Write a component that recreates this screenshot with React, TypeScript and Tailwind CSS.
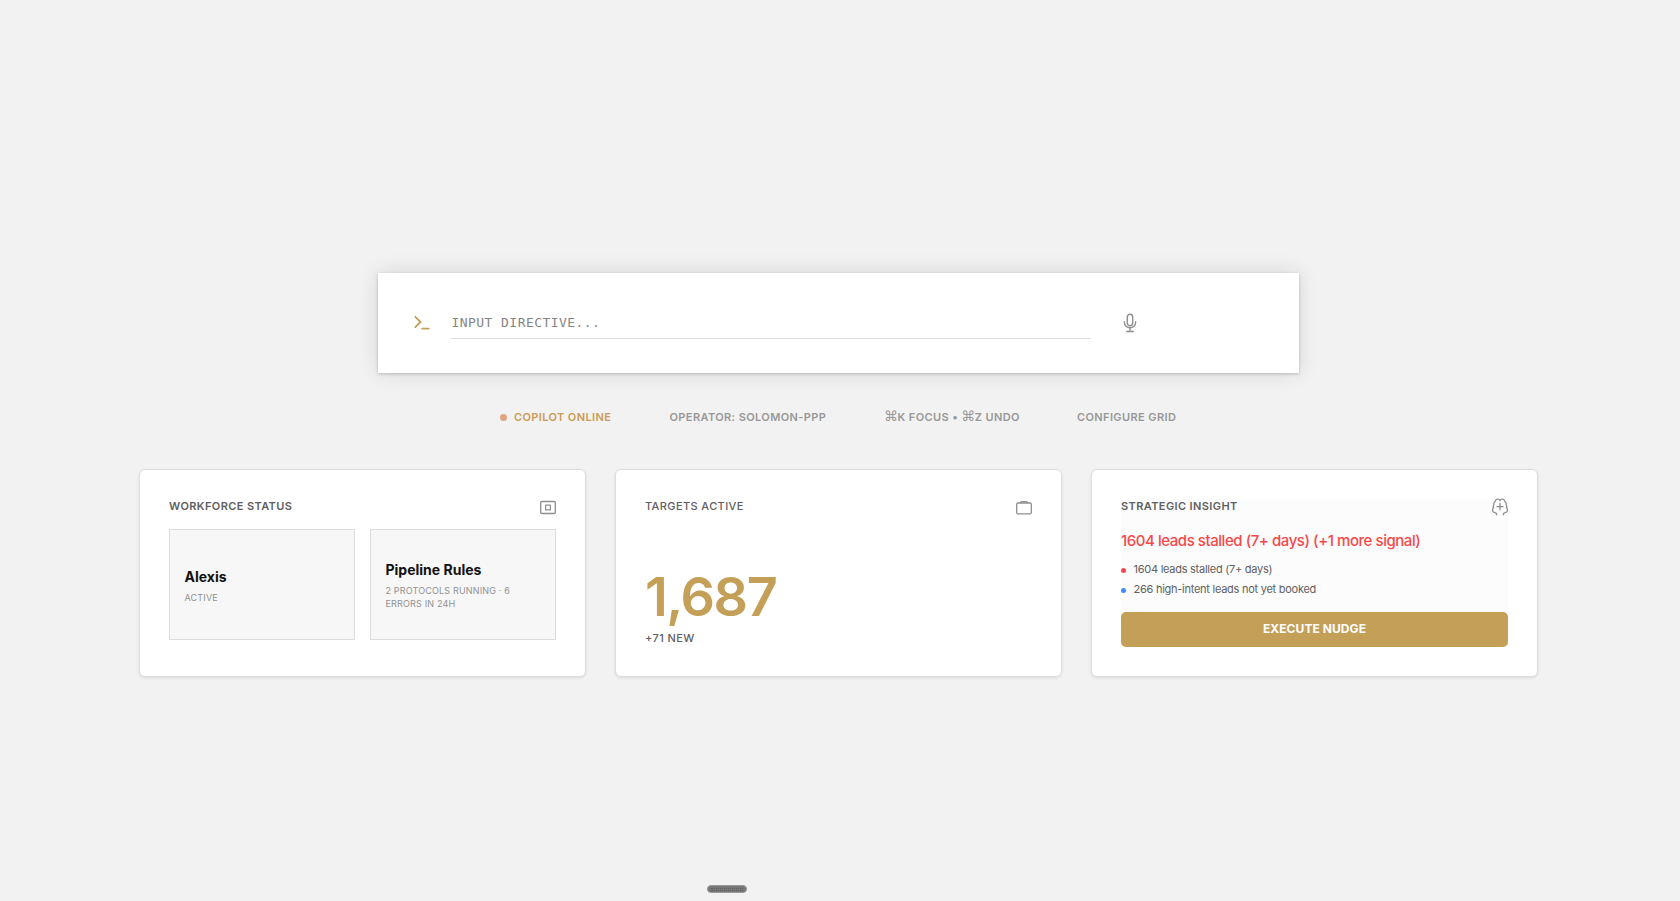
import type { ReactNode } from "react";

const iconProps = {
  fill: "none",
  stroke: "currentColor",
  strokeLinecap: "round" as const,
  strokeLinejoin: "round" as const,
};

function PromptIcon() {
  return (
    <svg width="18" height="18" viewBox="0 0 18 18" {...iconProps} strokeWidth="1.8" className="mb-[2px] ml-px shrink-0 text-[#c49f58]">
      <path d="M2.3 3.800 7.500 9 2.300 14.200M9.200 15.600h6.600" />
    </svg>
  );
}

function MicIcon() {
  return (
    <svg width="14" height="20" viewBox="0 0 14 20" {...iconProps} strokeWidth="1.4" className="shrink-0 text-[#8f8f8f]">
      <rect x="4.300" y="1.300" width="5.400" height="11.500" rx="2.700" />
      <path d="M1.400 8.600v1a5.600 5.200 0 0 0 11.200 0v-1M7 15v3.200M3.700 18.500h6.600" />
    </svg>
  );
}

function StatusIcon() {
  return (
    <svg width="16" height="18" viewBox="0 0 16 18" {...iconProps} strokeWidth="1.300">
      <rect x="0.700" y="2.500" width="14.600" height="12" rx="1" />
      <rect x="5.600" y="6.100" width="4.800" height="4.800" />
    </svg>
  );
}

function CaseIcon() {
  return (
    <svg width="16" height="18" viewBox="0 0 16 18" {...iconProps} strokeWidth="1.300">
      <rect x="0.700" y="4" width="14.600" height="10.800" rx="1.200" />
      <path d="M4.400 3.500c.4-.6.800-.8 1.600-.8h4c.8 0 1.200.2 1.600.8" />
    </svg>
  );
}

function BrainIcon() {
  return (
    <svg width="16" height="18" viewBox="0 0 16 18" {...iconProps} strokeWidth="1.300" className="-mt-px">
      <path d="M8 2.600C7.600 1.300 6.300.8 5.100 1.200 4 1.500 3.400 2.300 3.300 3.300 2.100 4.300 1.600 5.400 1.900 6.700 1.300 7.500 1.200 8.500 1.500 9.500.6 10.700.3 12 .8 13.200c.5 1.100 1.400 1.500 2.700 1.700.8.200 1.200.9 1.200 1.900" />
      <path d="M8 2.600C8.400 1.300 9.700.8 10.900 1.200c1.100.3 1.700 1.100 1.800 2.100 1.200 1 1.700 2.100 1.400 3.400.6.800.7 1.800.4 2.800.9 1.200 1.200 2.500.7 3.700-.5 1.100-1.400 1.500-2.700 1.700-.8.200-1.200.9-1.200 1.900" />
      <path d="M8 5.300v6.400M5 8.700h6" />
    </svg>
  );
}

function Card({ children }: { children: ReactNode }) {
  return (
    <section className="h-[208px] flex-1 rounded-[6px] border border-[#dedede] bg-white px-[29px] pt-[29px] shadow-[0_1px_3px_rgba(0,0,0,0.1)]">
      {children}
    </section>
  );
}

function Header({ title, icon, bold = true }: { title: string; icon: ReactNode; bold?: boolean }) {
  return (
    <header className="flex h-[18px] justify-between text-[#8f8f8f]">
      <h2 className={`text-[11px] leading-[15px] tracking-[0.39px] text-[#606060] ${bold ? "font-semibold" : "font-medium"}`}>{title}</h2>
      {icon}
    </header>
  );
}

function Worker({ name, status }: { name: string; status: string }) {
  return (
    <div className="flex h-[111px] flex-1 flex-col justify-center border border-[#dcdcdc] bg-[#f7f7f7] px-[14.5px]">
      <h3 className="text-[14px] leading-[21px] font-bold text-[#111111]">{name}</h3>
      <p className="mt-[4px] text-[9px] leading-[13px] tracking-[0.17px] text-[#919191]">{status}</p>
    </div>
  );
}

function Signal({ text, dot }: { text: string; dot: string }) {
  return (
    <li className="flex h-5 items-center gap-[7.5px]">
      <span className={`mt-[2px] size-[5px] rounded-full ${dot}`} />
      <span className="text-[11px] leading-4 tracking-[-0.26px] text-[#606060]">{text}</span>
    </li>
  );
}

function Command() {
  return <span className="font-['DejaVu_Sans',sans-serif] text-[14px] leading-none font-normal tracking-[-0.5px]">⌘</span>;
}

export default function App() {
  return (
    <main className="flex h-[901px] flex-col overflow-hidden bg-[#f2f2f2] pt-[273px] font-['Inter',sans-serif]">
      <div className="ml-[378px] flex h-[100px] w-[921px] shrink-0 items-center bg-white pl-[34px] shadow-[0_1px_3px_rgba(0,0,0,0.2),0_0_20px_rgba(0,0,0,0.12)]">
        <PromptIcon />
        <div className="ml-[20px] flex h-[32px] w-[640px] items-center border-b border-[#dcdcdc]">
          <input
            aria-label="Directive"
            placeholder="INPUT DIRECTIVE..."
            className="w-full bg-transparent pl-[0.5px] font-['DejaVu_Sans_Mono','Liberation_Mono',monospace] text-[13px] tracking-[0.44px] text-[#333333] outline-none placeholder:text-[#858585]"
          />
        </div>
        <div className="ml-[32px]"><MicIcon /></div>
      </div>

      <div className="mt-[35px] ml-[500px] flex h-[18px] shrink-0 items-center whitespace-nowrap text-[11px] leading-[18px] font-semibold tracking-[0.39px] text-[#989898]">
        <div className="flex w-[169.500px] items-center gap-[7px] text-[#cb9b56]">
          <span className="mt-px size-[7px] rounded-full bg-[#dfa580]" />
          <span>COPILOT ONLINE</span>
        </div>
        <span className="w-[214.500px]">OPERATOR: SOLOMON-PPP</span>
        <span className="w-[193px]"><Command />K FOCUS • <Command />Z UNDO</span>
        <span>CONFIGURE GRID</span>
      </div>

      <div className="mt-[43px] ml-[139px] flex w-[1399px] shrink-0 gap-[29px]">
        <Card>
          <Header title="WORKFORCE STATUS" icon={<StatusIcon />} />
          <div className="mt-[12px] flex gap-[15px]">
            <Worker name="Alexis" status="ACTIVE" />
            <Worker name="Pipeline Rules" status="2 PROTOCOLS RUNNING · 6 ERRORS IN 24H" />
          </div>
        </Card>
        <Card>
          <Header title="TARGETS ACTIVE" icon={<CaseIcon />} bold={false} />
          <div className="mt-[50px] text-[54px] leading-[60px] font-semibold tracking-[-1.5px] text-[#c49f58]">1,687</div>
          <p className="mt-[4px] text-[11px] leading-[15px] font-medium tracking-[0.39px] text-[#606060]">+71 NEW</p>
        </Card>
        <Card>
          <div className="h-[148px] bg-[#fcfcfc]">
            <Header title="STRATEGIC INSIGHT" icon={<BrainIcon />} />
            <p className="mt-[13px] text-[15px] leading-[22px] font-medium tracking-[-0.45px] text-[#f84848]">1604 leads stalled (7+ days) (+1 more signal)</p>
            <ul className="mt-[7px]">
              <Signal text="1604 leads stalled (7+ days)" dot="bg-[#fb4550]" />
              <Signal text="266 high-intent leads not yet booked" dot="bg-[#3d8bff]" />
            </ul>
            <button className="mt-[13px] block h-[35px] w-full rounded-[5px] bg-[#c49f58] pb-px text-[12px] font-bold tracking-[0.08px] text-white">EXECUTE NUDGE</button>
          </div>
        </Card>
      </div>

      <div className="mt-[208px] ml-[707px] flex h-[8px] w-[40px] shrink-0 flex-col items-center justify-center gap-[1px] rounded-full border border-[#989898] bg-[#777777]">
        <span className="w-[32px] border-t border-dotted border-[#606060]" />
        <span className="w-[32px] border-t border-dotted border-[#606060]" />
      </div>
    </main>
  );
}
